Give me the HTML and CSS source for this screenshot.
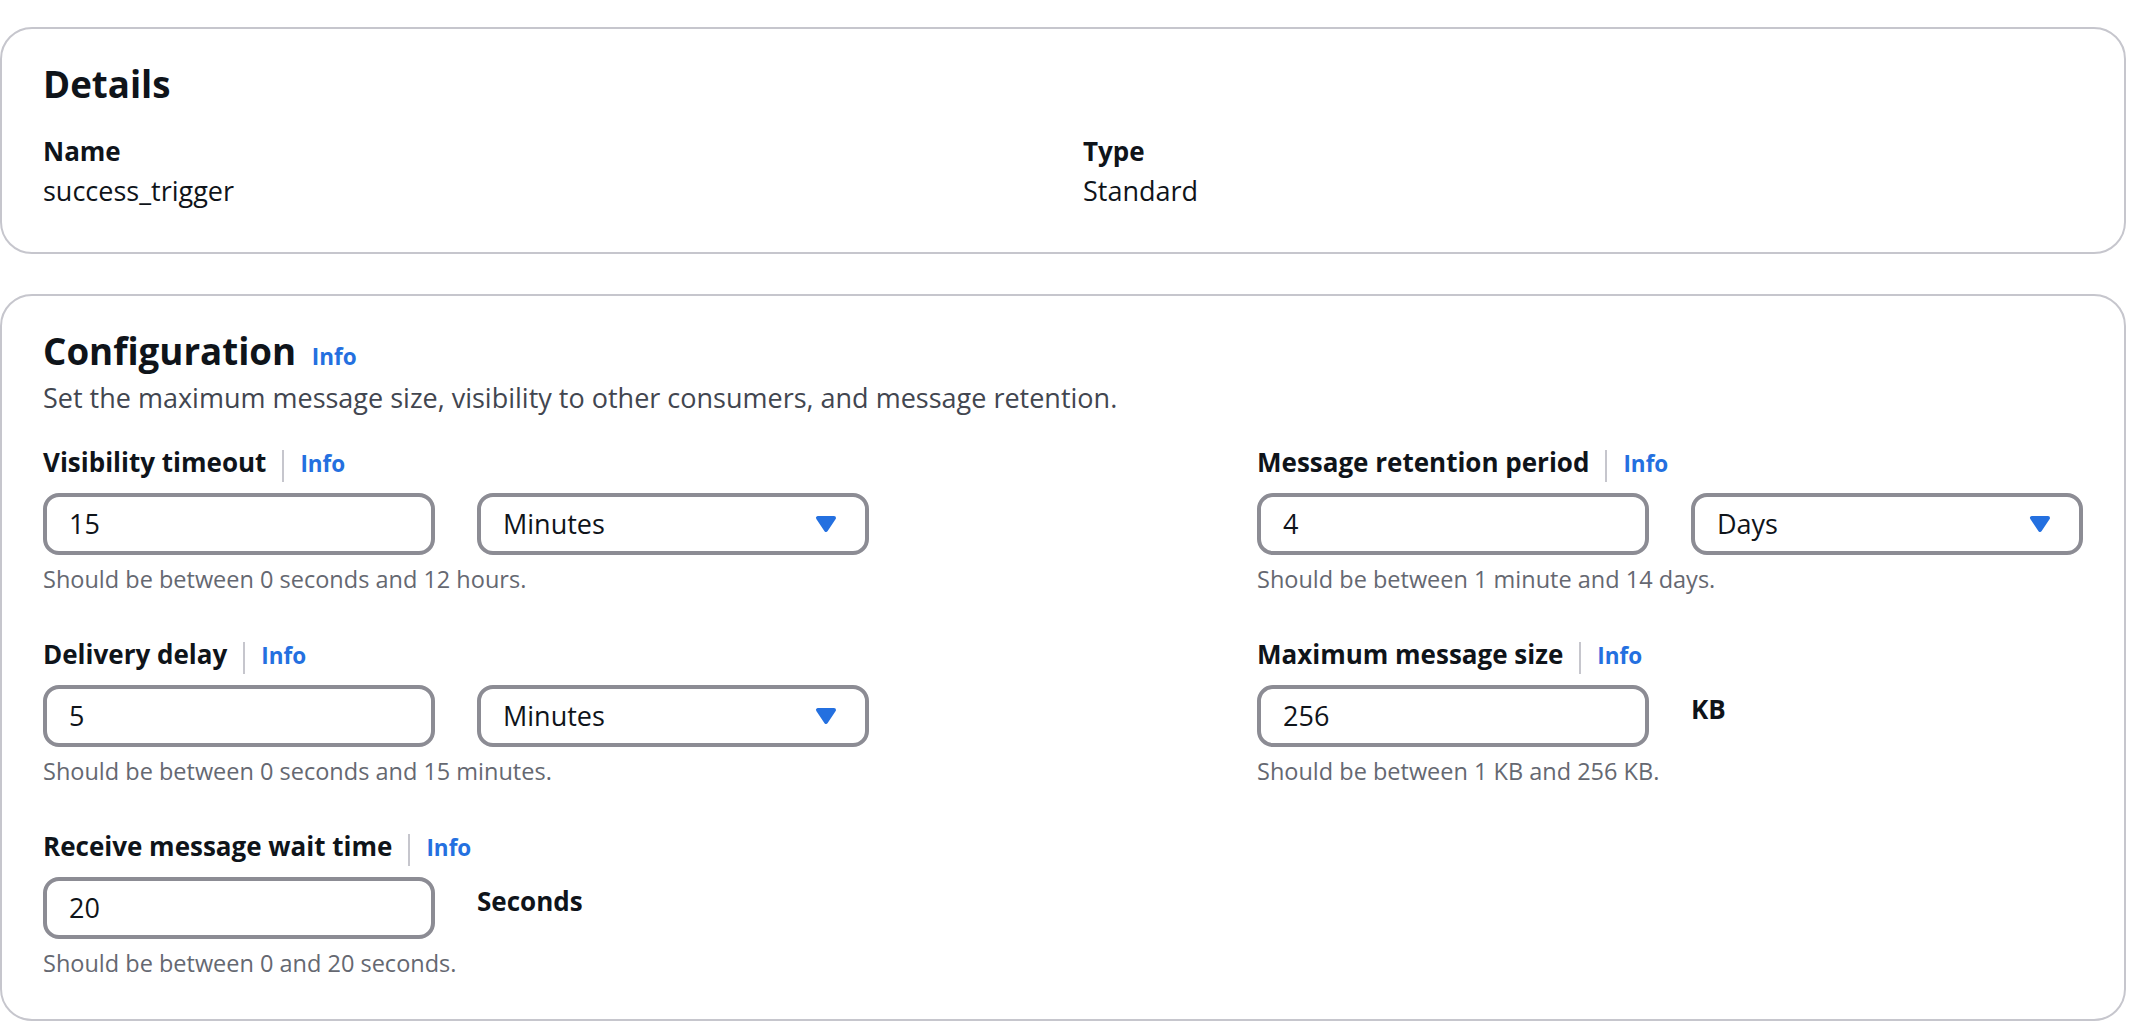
FILE: index.html
```html
<!DOCTYPE html>
<html lang="en">
<head>
<meta charset="utf-8">
<title>Queue details</title>
<link rel="stylesheet" href="styles.css">
</head>
<body>
<div class="page">
  <section class="card details">
    <h2 class="card-title">Details</h2>
    <div class="kv-grid">
      <div class="kv">
        <div class="kv-label">Name</div>
        <div class="kv-value">success_trigger</div>
      </div>
      <div class="kv">
        <div class="kv-label">Type</div>
        <div class="kv-value">Standard</div>
      </div>
    </div>
  </section>

  <section class="card config">
    <h2 class="card-title">Configuration <a class="info heading-info">Info</a></h2>
    <p class="card-desc">Set the maximum message size, visibility to other consumers, and message retention.</p>
    <div class="form-grid">
      <div class="field">
        <div class="label-row"><span class="label">Visibility timeout</span><span class="divider"></span><a class="info">Info</a></div>
        <div class="controls">
          <div class="input">15</div>
          <div class="select"><span>Minutes</span><svg class="caret" viewBox="0 0 16 16"><path d="M4 5h8l-4 6-4-6z"/></svg></div>
        </div>
        <div class="constraint">Should be between 0 seconds and 12 hours.</div>
      </div>
      <div class="field">
        <div class="label-row"><span class="label">Message retention period</span><span class="divider"></span><a class="info">Info</a></div>
        <div class="controls">
          <div class="input">4</div>
          <div class="select"><span>Days</span><svg class="caret" viewBox="0 0 16 16"><path d="M4 5h8l-4 6-4-6z"/></svg></div>
        </div>
        <div class="constraint">Should be between 1 minute and 14 days.</div>
      </div>
      <div class="field">
        <div class="label-row"><span class="label">Delivery delay</span><span class="divider"></span><a class="info">Info</a></div>
        <div class="controls">
          <div class="input">5</div>
          <div class="select"><span>Minutes</span><svg class="caret" viewBox="0 0 16 16"><path d="M4 5h8l-4 6-4-6z"/></svg></div>
        </div>
        <div class="constraint">Should be between 0 seconds and 15 minutes.</div>
      </div>
      <div class="field">
        <div class="label-row"><span class="label">Maximum message size</span><span class="divider"></span><a class="info">Info</a></div>
        <div class="controls">
          <div class="input">256</div>
          <div class="unit">KB</div>
        </div>
        <div class="constraint">Should be between 1 KB and 256 KB.</div>
      </div>
      <div class="field">
        <div class="label-row"><span class="label">Receive message wait time</span><span class="divider"></span><a class="info">Info</a></div>
        <div class="controls">
          <div class="input">20</div>
          <div class="unit">Seconds</div>
        </div>
        <div class="constraint">Should be between 0 and 20 seconds.</div>
      </div>
    </div>
  </section>
</div>
</body>
</html>
```

FILE: styles.css
```css
* { box-sizing: border-box; }

html, body {
  margin: 0;
  background: #ffffff;
}

body {
  font-family: "Open Sans", "Noto Sans", sans-serif;
  color: #0f141a;
  font-size: 27px;
  line-height: 40px;
}

.page {
  padding: 27px 20px 0 0;
}

.card {
  border: 2px solid #c6c6cd;
  border-radius: 32px;
  padding: 31px 41px 41px 41px;
  background: #ffffff;
}

.card.config {
  margin-top: 40px;
  padding-bottom: 40px;
}

.card-title {
  margin: 0;
  font-size: 36.7px;
  line-height: 48px;
  font-weight: 700;
  color: #0f141a;
}

.info {
  color: #2470e0;
  font-size: 22.5px;
  font-weight: 700;
  line-height: 32px;
  text-decoration: none;
  cursor: pointer;
}

.heading-info {
  margin-left: 6px;
}

.kv-grid {
  margin-top: 23px;
  display: grid;
  grid-template-columns: 1fr 1fr;
  column-gap: 40px;
}

.kv-label {
  font-weight: 700;
  font-size: 26px;
}

.card-desc {
  margin: 3px 0 0 0;
  color: #424650;
}

.form-grid {
  margin-top: 24px;
  display: grid;
  grid-template-columns: 826px 826px;
  justify-content: space-between;
  row-gap: 39px;
}

.label-row {
  display: flex;
  align-items: baseline;
  height: 40px;
}

.label {
  font-weight: 700;
  font-size: 26px;
}

.divider {
  align-self: flex-end;
  width: 2px;
  height: 32px;
  background: #c6c6cd;
  margin: 0 16px;
}

.controls {
  margin-top: 11px;
  display: flex;
  gap: 42px;
}

.input,
.select {
  width: 392px;
  height: 62px;
  border: 4px solid #8c8c94;
  border-radius: 16px;
  padding: 7px 22px;
  color: #0f141a;
  background: #ffffff;
}

.select {
  display: flex;
  align-items: center;
  justify-content: space-between;
  padding-right: 23px;
  padding-top: 0;
  padding-bottom: 0;
}

.caret {
  width: 32px;
  height: 32px;
  fill: #2470e0;
  stroke: #2470e0;
  stroke-width: 2;
  stroke-linejoin: round;
}

.unit {
  font-weight: 700;
  font-size: 26px;
  padding-top: 4px;
}

.constraint {
  margin-top: 8px;
  font-size: 23.5px;
  line-height: 32px;
  color: #656871;
}
```
